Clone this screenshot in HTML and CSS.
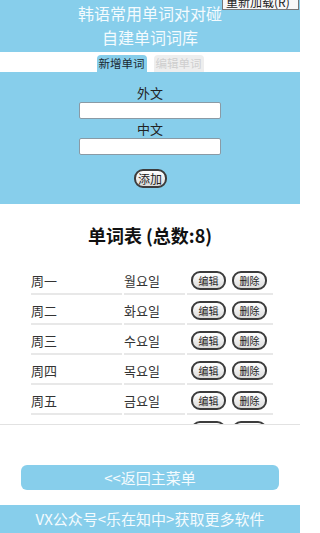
FILE: index.html
```html
<!DOCTYPE html>
<html lang="zh">
<head>
<meta charset="utf-8">
<title>自建单词词库</title>
<link rel="stylesheet" href="styles.css">
</head>
<body>
<div class="page">
  <header class="header">
    <div class="title">韩语常用单词对对碰</div>
    <div class="title">自建单词词库</div>
    <div class="tooltip">重新加载(R)</div>
  </header>
  <nav class="tabs">
    <span class="tab active">新增单词</span>
    <span class="tab inactive">编辑单词</span>
  </nav>
  <section class="form">
    <label class="label">外文</label>
    <input class="field" type="text">
    <label class="label">中文</label>
    <input class="field" type="text">
    <button class="add">添加</button>
  </section>
  <section class="list">
    <h2 class="list-title">单词表 (总数:8)</h2>
    <table class="words">
      <tr><td class="c1">周一</td><td class="c2">월요일</td><td class="c3"><button class="sm">编辑</button><button class="sm">删除</button></td></tr>
      <tr><td class="c1">周二</td><td class="c2">화요일</td><td class="c3"><button class="sm">编辑</button><button class="sm">删除</button></td></tr>
      <tr><td class="c1">周三</td><td class="c2">수요일</td><td class="c3"><button class="sm">编辑</button><button class="sm">删除</button></td></tr>
      <tr><td class="c1">周四</td><td class="c2">목요일</td><td class="c3"><button class="sm">编辑</button><button class="sm">删除</button></td></tr>
      <tr><td class="c1">周五</td><td class="c2">금요일</td><td class="c3"><button class="sm">编辑</button><button class="sm">删除</button></td></tr>
      <tr><td class="c1">周六</td><td class="c2">토요일</td><td class="c3"><button class="sm">编辑</button><button class="sm">删除</button></td></tr>
    </table>
  </section>
  <div class="back-wrap">
    <button class="back">&lt;&lt;返回主菜单</button>
  </div>
  <footer class="footer">VX公众号&lt;乐在知中&gt;获取更多软件</footer>
</div>
</body>
</html>
```

FILE: styles.css
```css
html, body {
  margin: 0;
  padding: 0;
  background: #fff;
}
body {
  font-family: "Noto Sans CJK SC", "Noto Sans", sans-serif;
  color: #222;
  width: 300px;
  height: 533px;
  overflow: hidden;
}
.page {
  display: flex;
  flex-direction: column;
  height: 533px;
}
.header {
  position: relative;
  background: #87ceeb;
  height: 52px;
  display: flex;
  flex-direction: column;
  align-items: center;
  padding-top: 1px;
  box-sizing: border-box;
}
.title {
  color: #f4fbfe;
  font-size: 16px;
  line-height: 24px;
}
.tooltip {
  position: absolute;
  top: -7px;
  left: 222px;
  width: 72px;
  height: 15px;
  background: #f8f8f8;
  border: 1px solid #777;
  font-size: 12px;
  line-height: 15px;
  color: #222;
  padding-left: 3px;
  box-sizing: content-box;
  white-space: nowrap;
  overflow: hidden;
}
.tabs {
  height: 20px;
  display: flex;
  justify-content: center;
  align-items: flex-end;
  gap: 7px;
  background: #fff;
}
.tab {
  width: 50px;
  height: 17px;
  font-size: 11.5px;
  line-height: 17px;
  text-align: center;
  border-radius: 4px 4px 0 0;
}
.tab.active {
  background: #87ceeb;
  color: #1a2a33;
}
.tab.inactive {
  background: #eeeeee;
  color: #cfcfcf;
}
.form {
  background: #87ceeb;
  height: 132px;
  display: flex;
  flex-direction: column;
  align-items: center;
  padding-top: 12px;
  box-sizing: border-box;
}
.label {
  font-size: 13px;
  line-height: 18px;
  color: #222;
}
.field {
  width: 142px;
  height: 17px;
  box-sizing: border-box;
  border: 1px solid #8a9aa5;
  border-radius: 2px;
  background: #fff;
  margin: 0 0 1px 0;
  padding: 0;
}
.add {
  margin-top: 13px;
  width: 33px;
  height: 19px;
  padding: 0;
  font-family: "Noto Sans CJK SC", sans-serif;
  font-size: 12px;
  line-height: 14px;
  color: #222;
  background: linear-gradient(#ffffff, #dcdcdc);
  border: 2px solid #3c3c3c;
  border-radius: 9px;
}
.list {
  height: 221px;
  overflow: hidden;
  border-bottom: 1px solid #e2e2e2;
  box-sizing: border-box;
  padding-top: 18px;
}
.list-title {
  margin: 0 0 17px 0;
  text-align: center;
  font-size: 18px;
  line-height: 26px;
  font-weight: bold;
  color: #111;
}
.words {
  margin-left: 29px;
  border-collapse: separate;
  border-spacing: 2px;
}
.words td {
  height: 26px;
  padding: 0;
  border-bottom: 2px solid #e8e8e8;
  font-size: 13px;
  color: #333;
  vertical-align: middle;
}
.c1 { width: 91px; padding-left: 1px; }
.c2 { width: 61px; color: #444; }
.c3 {
  width: 82px;
  white-space: nowrap;
  padding-left: 4px !important;
}
.sm {
  width: 35px;
  height: 19px;
  padding: 0;
  margin-right: 6px;
  font-family: "Noto Sans CJK SC", sans-serif;
  font-size: 10px;
  line-height: 13px;
  color: #222;
  background: linear-gradient(#ffffff, #dcdcdc);
  border: 2px solid #3c3c3c;
  border-radius: 9px;
  vertical-align: middle;
}
.back-wrap {
  flex: 1;
  display: flex;
  align-items: flex-end;
  justify-content: center;
  padding-bottom: 15px;
}
.back {
  width: 258px;
  height: 25px;
  background: #87ceeb;
  border: none;
  border-radius: 6px;
  color: #f4fbfe;
  font-family: "Noto Sans CJK SC", sans-serif;
  font-size: 15px;
  line-height: 25px;
  padding: 0;
}
.footer {
  height: 28px;
  background: #87ceeb;
  color: #f4fbfe;
  font-size: 15px;
  line-height: 28px;
  text-align: center;
}
```
